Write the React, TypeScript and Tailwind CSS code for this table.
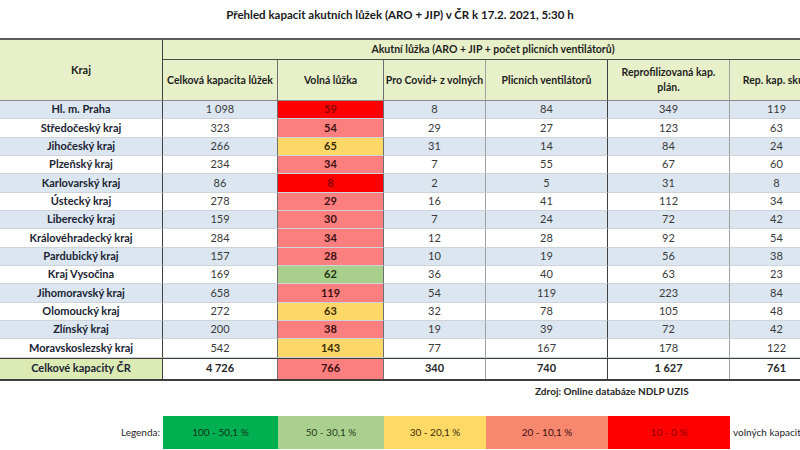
import React from "react";

type Row = [string, string, string, string, string, string, string, string];

const rows: Row[] = [
  ["Hl. m. Praha", "1 098", "59", "r", "8", "84", "349", "119"],
  ["Středočeský kraj", "323", "54", "s", "29", "27", "123", "63"],
  ["Jihočeský kraj", "266", "65", "y", "31", "14", "84", "24"],
  ["Plzeňský kraj", "234", "34", "s", "7", "55", "67", "60"],
  ["Karlovarský kraj", "86", "8", "r", "2", "5", "31", "8"],
  ["Ústecký kraj", "278", "29", "s", "16", "41", "112", "34"],
  ["Liberecký kraj", "159", "30", "s", "7", "24", "72", "42"],
  ["Královéhradecký kraj", "284", "34", "s", "12", "28", "92", "54"],
  ["Pardubický kraj", "157", "28", "s", "10", "19", "56", "38"],
  ["Kraj Vysočina", "169", "62", "g", "36", "40", "63", "23"],
  ["Jihomoravský kraj", "658", "119", "s", "54", "119", "223", "84"],
  ["Olomoucký kraj", "272", "63", "y", "32", "78", "105", "48"],
  ["Zlínský kraj", "200", "38", "s", "19", "39", "72", "42"],
  ["Moravskoslezský kraj", "542", "143", "y", "77", "167", "178", "122"],
];

const volnaBg: Record<string, string> = {
  r: "bg-[#ff0000] text-[#8b0000]",
  s: "bg-[#fb7f7f] text-[#3d0f0f]",
  y: "bg-[#fdd868] text-[#3a2c05]",
  g: "bg-[#a8cf8c] text-[#1f3310]",
};

const colBorder = [
  "border-r border-r-[#3f3f3f]",
  "border-r border-r-[#6f6f6f]",
  "border-r border-r-[#6f6f6f]",
  "border-r border-r-[#a0a0a0]",
  "border-r border-r-[#3f3f3f]",
  "border-r border-r-[#a0a0a0]",
  "",
];

const headers = [
  { t: "Celková kapacita lůžek", c: "px-[2px] whitespace-nowrap" },
  { t: "Volná lůžka", c: "px-[2px] whitespace-nowrap" },
  { t: "Pro Covid+ z volných", c: "px-[1px] whitespace-nowrap" },
  { t: "Plicních ventilátorů", c: "px-[2px] whitespace-nowrap" },
  { t: "Reprofilizovaná kap. plán.", c: "px-[8px]" },
  { t: "Rep. kap. skut.", c: "px-[2px] whitespace-nowrap" },
];

const font = { fontFamily: "Lato, 'Open Sans', sans-serif" };

export default function App() {
  return (
    <div
      className="w-[800px] h-[450px] bg-white overflow-hidden text-[#262626]"
      style={font}
    >
      <div className="h-[38px] pt-[6px]">
        <div className="text-center font-bold text-[11.5px] leading-[17px] text-[#1a1a1a]">
          Přehled kapacit akutních lůžek (ARO + JIP) v ČR k 17.2. 2021, 5:30 h
        </div>
      </div>

      <div className="w-[823px] grid grid-cols-[163px_115px_106px_102px_122px_122px_93px] grid-rows-[20px_41px_repeat(14,18.33px)_21px] border-t-2 border-t-[#5a5a5a] border-b-2 border-b-[#3f3f3f]">
        <div className="row-span-2 bg-[#e7f0c9] border-r border-r-[#3f3f3f] border-b border-b-[#8a8a8a] flex items-center justify-center font-bold text-[11px] text-[#1f1f1f]">
          Kraj
        </div>
        <div className="col-span-6 bg-[#e7f0c9] border-b border-b-[#4a4a4a] flex items-center justify-center font-bold text-[10.5px] text-[#1f1f1f]">
          Akutní lůžka (ARO + JIP + počet plicních ventilátorů)
        </div>
        {headers.map((h, i) => (
          <div
            key={h.t}
            className={`bg-[#e7f0c9] border-b border-b-[#8a8a8a] ${colBorder[i + 1]} ${h.c} flex items-center justify-center text-center font-bold text-[10.5px] leading-[15px] text-[#1f1f1f]`}
          >
            {h.t}
          </div>
        ))}

        {rows.map((r, ri) => {
          const rowBg = ri % 2 === 0 ? "bg-[#dce6f1]" : "bg-white";
          const cells = [r[0], r[1], r[2], r[4], r[5], r[6], r[7]];
          return cells.map((c, ci) => {
            let cls = `${colBorder[ci]} border-b border-b-[#cfd4da] flex items-center justify-center text-[11px] whitespace-nowrap `;
            if (ci === 0) cls += `${rowBg} font-bold text-[#1b2433]`;
            else if (ci === 2) cls += `${volnaBg[r[3]]} font-bold`;
            else cls += `${rowBg} text-[#3a3a3a]`;
            return (
              <div key={`${ri}-${ci}`} className={cls}>
                {c}
              </div>
            );
          });
        })}

        {["Celkové kapacity ČR", "4 726", "766", "340", "740", "1 627", "761"].map(
          (c, ci) => {
            let cls = `${colBorder[ci]} border-t border-t-[#3f3f3f] flex items-center justify-center text-[11px] font-bold whitespace-nowrap `;
            if (ci === 0) cls += "bg-[#dcebb4] text-[#1b2433]";
            else if (ci === 2) cls += "bg-[#fb7f7f] text-[#3d0f0f]";
            else cls += "bg-white text-[#262626]";
            return (
              <div key={`t-${ci}`} className={cls}>
                {c}
              </div>
            );
          }
        )}
      </div>

      <div className="h-[22px] pl-[535px] flex items-center">
        <span className="font-bold text-[10px] text-[#262626] whitespace-nowrap">
          Zdroj: Online databáze NDLP UZIS
        </span>
      </div>

      <div className="mt-[13px] h-[33px] w-[823px] flex items-stretch text-[10px]">
        <div className="w-[163px] flex items-center justify-end pr-[3px] text-[#262626]">
          Legenda:
        </div>
        <div className="w-[115px] bg-[#00b050] flex items-center justify-center text-[#10301a]">
          100 - 50,1 %
        </div>
        <div className="w-[106px] bg-[#a9d08e] flex items-center justify-center text-[#263a18]">
          50 - 30,1 %
        </div>
        <div className="w-[102px] bg-[#ffd966] flex items-center justify-center text-[#3a2c05]">
          30 - 20,1 %
        </div>
        <div className="w-[122px] bg-[#f8876f] flex items-center justify-center text-[#3d0f0f]">
          20 - 10,1 %
        </div>
        <div className="w-[122px] bg-[#ff0000] flex items-center justify-center text-[#8b0000]">
          10 - 0 %
        </div>
        <div className="flex items-center pl-[3px] whitespace-nowrap text-[#262626]">
          volných kapacit
        </div>
      </div>
    </div>
  );
}
